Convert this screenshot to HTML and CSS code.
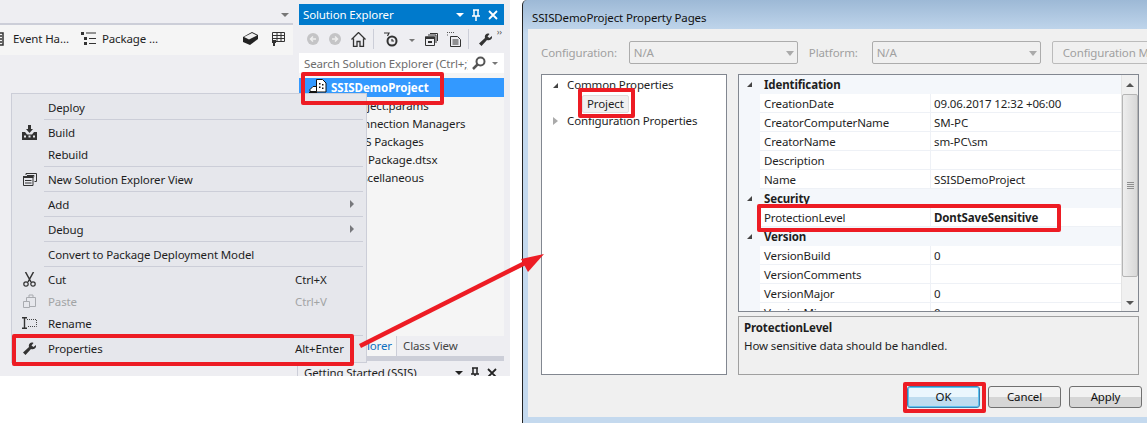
FILE: index.html
```html
<!DOCTYPE html>
<html lang="en">
<head>
  <meta charset="UTF-8">
  <title>SSISDemoProject Property Pages</title>
  <link rel="stylesheet" href="styles.css">
</head>
<body>
  <div class="canvas">
    <section class="vs">
      <div class="doc">
        <div class="doc-top"><span class="caret-down"></span></div>
        <div class="doc-tools">
          <svg class="ico ico-cut" width="8" height="14" viewBox="0 0 8 14"><path d="M0 1h6v12H0z M2 4h3M2 7h3M2 10h3" fill="none" stroke="#333" stroke-width="1.5"/></svg>
          <span class="tool-label event">Event Ha…</span>
          <svg class="ico" width="15" height="15" viewBox="0 0 15 15"><path d="M0 1h3v3H0zM3 11h3v3H3zM3 6h3v3H3z" fill="#333"/><path d="M5 2h10M8 7.500h7M8 12.500h7" stroke="#333"/></svg>
          <span class="tool-label">Package …</span>
          <span class="spacer"></span>
          <svg class="ico ico-cube" width="15" height="13" viewBox="0 0 15 13"><path d="M0 5l9-5 6 3v4l-8 6-7-3z" fill="#222"/><path d="M1 5l8-4 5 2.500-8 4z" fill="#eee"/></svg>
          <svg class="ico" width="14" height="15" viewBox="0 0 14 15"><path d="M1.500 1.500h12v9h-12zM1.500 4.500h12M1.500 7.500h12M6 1.500v9M10 1.500v9" fill="none" stroke="#333"/><path d="M1 9h4v3H4v3H2v-3H1z" fill="#333"/></svg>
        </div>
      </div>

      <aside class="explorer">
        <header class="pane-title">
          <span>Solution Explorer</span>
          <span class="grip"></span>
          <span class="pane-caret"></span>
          <svg width="10" height="12" viewBox="0 0 10 12"><path d="M2 1h6M3 1v6h4V1M1 7h8M5 7v5" fill="none" stroke="#fff" stroke-width="1.500"/></svg>
          <svg width="10" height="10" viewBox="0 0 10 10"><path d="M1 1l8 8M9 1l-8 8" stroke="#fff" stroke-width="1.800"/></svg>
        </header>
        <div class="pane-tools">
          <svg width="12" height="12" viewBox="0 0 12 12"><circle cx="6" cy="6" r="6" fill="#c4c4c6"/><path d="M9 6H3.500M6 3.500L3.500 6 6 8.500" fill="none" stroke="#eee" stroke-width="1.500"/></svg>
          <svg width="12" height="12" viewBox="0 0 12 12"><circle cx="6" cy="6" r="6" fill="#c4c4c6"/><path d="M3 6h5.500M6 3.500L8.500 6 6 8.500" fill="none" stroke="#eee" stroke-width="1.500"/></svg>
          <svg width="15" height="15" viewBox="0 0 15 15"><path d="M.5 7.500l7-7 7 7M2.500 6.500v8h3.500v-5h3v5h3.500v-8" fill="none" stroke="#333" stroke-width="1.300"/></svg>
          <span class="tool-sep"></span>
          <svg class="tool-clock" width="14" height="15" viewBox="0 0 14 15"><circle cx="8" cy="9" r="4.500" fill="none" stroke="#333" stroke-width="2"/><path d="M8 7v2h2M0 1h5L3.500 4" fill="none" stroke="#333" stroke-width="1.200"/></svg>
          <span class="mini-caret"></span>
          <svg class="tool-copy" width="13" height="13" viewBox="0 0 13 13"><path d="M.5 4h9v8.500h-9zM3 2h8v8M5 .5h7.500V8" fill="none" stroke="#333"/><path d="M0 3.500h10V6H0zM3 8h4v2H3z" fill="#333"/></svg>
          <svg class="tool-doc" width="14" height="15" viewBox="0 0 14 15"><path d="M3.500 4.500h7l3 3v7h-10zM5.500 8h6M5.500 10h6M5.500 12h6" fill="none" stroke="#333"/><path d="M0 .5h7M0 3h2" stroke="#555" stroke-dasharray="1 1"/></svg>
          <span class="tool-sep"></span>
          <svg width="13" height="13" viewBox="0 0 13 13"><path d="M13 3L10.500 5 8.500 3.500 10.500 1C8 -.5 5 2 6 5L0 10.500 2.500 13 8 7C11 8 13.500 6 13 3z" fill="#333"/></svg>
          <span class="more">&rsaquo;&rsaquo;</span>
        </div>
        <div class="pane-search">
          <span class="search-text">Search Solution Explorer (Ctrl+;)</span>
          <svg width="14" height="14" viewBox="0 0 14 14"><circle cx="8.500" cy="5.500" r="4" fill="none" stroke="#555" stroke-width="2"/><path d="M5.500 8.500L1 13" stroke="#555" stroke-width="2.500"/></svg>
          <span class="mini-caret"></span>
        </div>
        <ul class="tree">
          <li class="tree-selected">
            <svg width="18" height="17" viewBox="0 0 18 17"><path d="M7.500 .5h6l3.500 3.500v9H7.500z" fill="#fff" stroke="#111"/><path d="M10 4h1.500v1.500H10zM13 5h1.500v1.500H13zM10 7.500h1.500V9H10zM13 8.500h1.500V10H13z" fill="#111"/><path d="M1 10.500l3-3h3.500v5H1z" fill="#fff" stroke="#111"/><path d="M0 13h8v4H0z" fill="#111"/></svg>
            <span>SSISDemoProject</span>
          </li>
          <li class="tree-row">Project.params</li>
          <li class="tree-row">Connection Managers</li>
          <li class="tree-row">SSIS Packages</li>
          <li class="tree-row tree-file">Package.dtsx</li>
          <li class="tree-row">Miscellaneous</li>
        </ul>
        <div class="pane-tabs">
          <span class="tab-active">Solution Explorer</span>
          <span class="tab">Class View</span>
        </div>
        <div class="tabs-rule"></div>
        <div class="next-pane">
          <span>Getting Started (SSIS)</span>
          <span class="grip dark"></span>
          <span class="pane-caret dark"></span>
          <svg width="10" height="12" viewBox="0 0 10 12"><path d="M2 1h6M3 1v6h4V1M1 7h8M5 7v5" fill="none" stroke="#222" stroke-width="1.500"/></svg>
          <svg width="10" height="10" viewBox="0 0 10 10"><path d="M1 1l8 8M9 1l-8 8" stroke="#222" stroke-width="1.800"/></svg>
        </div>
      </aside>
    </section>

    <nav class="menu">
      <div class="menu-item"><span class="m-icon"></span><span class="m-label">Deploy</span></div>
      <div class="menu-sep"></div>
      <div class="menu-item">
        <span class="m-icon"><svg width="15" height="15" viewBox="0 0 15 15"><path d="M6 0h3v4h2L7.500 8 4 4h2z" fill="#333"/><path d="M0 7h3l2 2.500h5L12 7h3v8H0z" fill="#333"/><path d="M2 11.500h2M6.500 11.500h2M11 11.500h2" stroke="#e6e7ec" stroke-width="2"/></svg></span>
        <span class="m-label">Build</span>
      </div>
      <div class="menu-item"><span class="m-icon"></span><span class="m-label">Rebuild</span></div>
      <div class="menu-sep"></div>
      <div class="menu-item">
        <span class="m-icon"><svg width="14" height="13" viewBox="0 0 14 13"><path d="M.5 3.500h9.500v9H.5z" fill="none" stroke="#333"/><path d="M0 3h10.500v2H0zM2 7h6.500v1H2zM2 9.500h6.500v1H2z" fill="#333"/><path d="M3 2V.5h10.500v8H11.500M4 2.500h7v1" fill="none" stroke="#333"/></svg></span>
        <span class="m-label">New Solution Explorer View</span>
      </div>
      <div class="menu-sep"></div>
      <div class="menu-item"><span class="m-icon"></span><span class="m-label">Add</span><span class="m-arrow"></span></div>
      <div class="menu-sep"></div>
      <div class="menu-item"><span class="m-icon"></span><span class="m-label">Debug</span><span class="m-arrow"></span></div>
      <div class="menu-sep"></div>
      <div class="menu-item"><span class="m-icon"></span><span class="m-label">Convert to Package Deployment Model</span></div>
      <div class="menu-sep"></div>
      <div class="menu-item">
        <span class="m-icon"><svg width="13" height="15" viewBox="0 0 13 15"><path d="M2.500 0l5.500 10M10.500 0L5 10" stroke="#333" stroke-width="1.500" fill="none"/><circle cx="3" cy="12" r="2.200" fill="none" stroke="#333" stroke-width="1.200"/><circle cx="10" cy="12" r="2.200" fill="none" stroke="#333" stroke-width="1.200"/></svg></span>
        <span class="m-label">Cut</span><span class="m-key">Ctrl+X</span>
      </div>
      <div class="menu-item off">
        <span class="m-icon"><svg width="14" height="14" viewBox="0 0 14 14"><path d="M.5 7.500h6v6h-6zM3.500 7V3.500h9v9h-6M6 3.500V1h4v2.500" fill="none" stroke="#a9abb0"/></svg></span>
        <span class="m-label">Paste</span><span class="m-key">Ctrl+V</span>
      </div>
      <div class="menu-item">
        <span class="m-icon"><svg width="15" height="12" viewBox="0 0 15 12"><path d="M0 .7h5M0 11.300h5M2.500 .5v11" stroke="#333" stroke-width="1.400" fill="none"/><path d="M5 2.500h9.500v7H5" fill="none" stroke="#444" stroke-dasharray="1 1"/></svg></span>
        <span class="m-label">Rename</span>
      </div>
      <div class="menu-sep"></div>
      <div class="menu-item">
        <span class="m-icon"><svg width="13" height="13" viewBox="0 0 13 13"><path d="M13 3L10.500 5 8.500 3.500 10.500 1C8 -.5 5 2 6 5L0 10.500 2.500 13 8 7C11 8 13.500 6 13 3z" fill="#333"/></svg></span>
        <span class="m-label">Properties</span><span class="m-key">Alt+Enter</span>
      </div>
    </nav>

    <section class="dialog">
      <header class="dialog-title">SSISDemoProject Property Pages</header>
      <div class="dialog-body">
        <div class="config-row">
          <label>Configuration:</label>
          <span class="select select-config">N/A<i></i></span>
          <label>Platform:</label>
          <span class="select select-platform">N/A<i></i></span>
          <span class="config-btn">Configuration Manager...</span>
        </div>
        <div class="panes">
          <div class="nav-tree">
            <div class="nav-row"><span class="tri-open"></span>Common Properties</div>
            <div class="nav-child"><span>Project</span></div>
            <div class="nav-row"><span class="tri-closed"></span>Configuration Properties</div>
          </div>
          <div class="props">
            <div class="grid-wrap">
              <div class="grid">
                <div class="cat"><span class="tri-open"></span>Identification</div>
                <div class="prop"><span>CreationDate</span><span>09.06.2017 12:32 +06:00</span></div>
                <div class="prop"><span>CreatorComputerName</span><span>SM-PC</span></div>
                <div class="prop"><span>CreatorName</span><span>sm-PC\sm</span></div>
                <div class="prop"><span>Description</span><span></span></div>
                <div class="prop"><span>Name</span><span>SSISDemoProject</span></div>
                <div class="cat"><span class="tri-open"></span>Security</div>
                <div class="prop"><span>ProtectionLevel</span><span class="strong">DontSaveSensitive</span></div>
                <div class="cat"><span class="tri-open"></span>Version</div>
                <div class="prop"><span>VersionBuild</span><span>0</span></div>
                <div class="prop"><span>VersionComments</span><span></span></div>
                <div class="prop"><span>VersionMajor</span><span>0</span></div>
                <div class="prop"><span>VersionMinor</span><span>0</span></div>
              </div>
              <div class="scroll">
                <span class="scroll-up"></span>
                <span class="scroll-thumb"></span>
                <span class="scroll-down"></span>
              </div>
            </div>
            <div class="help">
              <strong>ProtectionLevel</strong>
              <p>How sensitive data should be handled.</p>
            </div>
          </div>
        </div>
        <div class="actions">
          <span class="btn btn-default">OK</span>
          <span class="btn">Cancel</span>
          <span class="btn">Apply</span>
        </div>
      </div>
    </section>

    <span class="mark mark-project"></span>
    <span class="mark mark-props"></span>
    <span class="mark mark-node"></span>
    <span class="mark mark-level"></span>
    <span class="mark mark-ok"></span>
    <svg class="arrow" width="190" height="100" viewBox="0 0 190 100">
      <path d="M1 94L170 9" stroke="#ed1c24" stroke-width="4.500"/>
      <path d="M185 2L162 7 169 20z" fill="#ed1c24"/>
    </svg>
  </div>
</body>
</html>
```

FILE: styles.css
```css
* {
  margin: 0;
  padding: 0;
  box-sizing: border-box;
}
body {
  background-color: #fff;
  font-family: "Noto Sans", "Open Sans", sans-serif;
  font-size: 11.5px;
  letter-spacing: -0.13px;
  color: #1e1e1e;
}
.canvas {
  position: relative;
  width: 1147px;
  height: 423px;
  overflow: hidden;
}

/* left window */
.vs {
  position: absolute;
  left: 0;
  top: 0;
  width: 510px;
  height: 376px;
  background-color: #eeeef2;
  display: flex;
  overflow: hidden;
}
.doc {
  width: 293px;
  margin-right: 6px;
}
.doc-top {
  height: 23px;
  display: flex;
  justify-content: flex-end;
  align-items: center;
  padding: 6px 4px 0 0;
}
.caret-down {
  border: 4px solid transparent;
  border-top: 4px solid #777;
  border-bottom: 0;
}
.doc-tools {
  height: 32px;
  background-color: #f5f5f5;
  border-top: 2px solid #ccced8;
  display: flex;
  align-items: center;
  padding: 0 8px 3px 0;
}
.doc-tools .ico {
  flex: none;
}
.ico-cut {
  margin-left: -3px;
}
.ico-cube {
  margin-right: 13px;
}
.tool-label {
  margin: 0 0 0 6px;
  white-space: nowrap;
  color: #1e1e1e;
}
.tool-label.event {
  margin: 0 12px 0 8px;
}
.spacer {
  flex: 1;
}
.explorer {
  width: 205px;
  margin-top: 4px;
  display: flex;
  flex-direction: column;
}
.explorer > * {
  flex: none;
}
.pane-title {
  height: 21px;
  background-color: #007acc;
  color: #fff;
  display: flex;
  align-items: center;
  gap: 7px;
  padding: 0 6px 0 4px;
  white-space: nowrap;
}
.grip {
  flex: 1;
  height: 5px;
  margin-left: 1px;
  background-image: radial-gradient(#59a8dd 0.6px, transparent 0.7px);
  background-size: 3px 2px;
}
.grip.dark {
  background-image: radial-gradient(#999 0.6px, transparent 0.7px);
}
.pane-caret {
  border: 4px solid transparent;
  border-top: 4px solid #fff;
  border-bottom: 0;
}
.pane-caret.dark {
  border-top-color: #222;
}
.pane-tools {
  height: 28px;
  display: flex;
  align-items: center;
  gap: 10px;
  padding: 0 0 0 8px;
  position: relative;
}
.tool-sep {
  width: 1px;
  height: 20px;
  margin: 0 0 0 -3px;
  background-color: #ccced8;
}
.tool-clock {
  margin-right: 1px;
}
.tool-copy {
  margin-left: 2px;
}
.tool-doc {
  margin-left: -1px;
}
.mini-caret {
  border: 3px solid transparent;
  border-top: 3px solid #777;
  border-bottom: 0;
  margin-top: 2px;
  margin-right: -2px;
}
.more {
  position: absolute;
  right: 2px;
  top: 0;
  font-size: 9px;
  color: #555;
}
.pane-search {
  height: 20px;
  background-color: #fff;
  display: flex;
  align-items: center;
  gap: 4px;
  padding: 0 6px 0 5px;
}
.search-text {
  flex: 1;
  overflow: hidden;
  white-space: nowrap;
  color: #6d6d6d;
}
.pane-search .mini-caret {
  margin: 1px 0 0 2px;
}
.tree {
  list-style: none;
  height: 263px;
  background-color: #f5f5f5;
  padding-top: 5px;
}
.tree-selected {
  height: 19px;
  background-color: #3399ff;
  color: #fff;
  font-weight: bold;
  letter-spacing: 0;
  display: flex;
  align-items: center;
  gap: 4px;
  padding-left: 10px;
}
.tree-row {
  height: 18px;
  line-height: 18px;
  padding-left: 50px;
  white-space: nowrap;
}
.tree-file {
  padding-left: 69px;
}
.pane-tabs {
  height: 20px;
  display: flex;
  background-color: #f5f5f5;
}
.tab-active {
  width: 98px;
  padding-right: 4px;
  text-align: right;
  color: #0e70c0;
  line-height: 20px;
  white-space: nowrap;
  overflow: hidden;
  border-right: 1px solid #ccced8;
}
.tab {
  padding-left: 6px;
  line-height: 20px;
  background-color: #eeeef2;
  flex: 1;
  color: #444;
}
.tabs-rule {
  height: 5px;
  background-color: #ccced8;
}
.next-pane {
  margin-top: 1px;
  height: 21px;
  margin-left: -2px;
  padding: 0 7px 0 6px;
  border-left: 1px solid #ccced8;
  display: flex;
  align-items: center;
  gap: 7px;
  white-space: nowrap;
}

/* context menu */
.menu {
  position: absolute;
  left: 11px;
  top: 93px;
  width: 356px;
  height: 270px;
  background-color: #e6e7ec;
  border: 1px solid #ccced8;
  padding: 3px 3px 0 0;
}
.menu-item {
  height: 22px;
  padding-bottom: 2px;
  display: flex;
  align-items: center;
}
.m-icon {
  width: 33px;
  margin-right: 3px;
  display: flex;
  justify-content: center;
  padding-left: 2px;
}
.m-label {
  flex: 1;
  white-space: nowrap;
}
.m-key {
  width: 68px;
  white-space: nowrap;
}
.m-arrow {
  border: 4px solid transparent;
  border-left: 4px solid #77787c;
  border-right: 0;
  margin-right: 9px;
}
.menu-sep {
  height: 3px;
  margin-left: 32px;
  border-top: 1px solid #ccced8;
}
.off {
  color: #a2a4a5;
}

/* property pages dialog */
.dialog {
  position: absolute;
  left: 522px;
  top: 0;
  width: 640px;
  height: 423px;
  background: linear-gradient(#9db9d6, #c4d9ee 34px);
  border-left: 1px solid #222;
  border-top-left-radius: 5px;
  padding: 1px 0 6px 5px;
  display: flex;
  flex-direction: column;
}
.dialog-title {
  height: 28px;
  line-height: 34px;
  padding-left: 4px;
  color: #111;
  white-space: nowrap;
}
.dialog-body {
  flex: 1;
  background-color: #f0f0f0;
  padding: 12px 0 0 13px;
}
.config-row {
  display: flex;
  align-items: center;
  height: 23px;
  width: 620px;
  color: #a0a0a0;
  white-space: nowrap;
}
.config-row label {
  flex: none;
}
.select {
  position: relative;
  flex: none;
  width: 169px;
  height: 23px;
  line-height: 21px;
  border: 1px solid #acacac;
  border-radius: 2px;
  padding-left: 4px;
}
.select i {
  position: absolute;
  right: 3px;
  top: 9px;
  border: 4px solid transparent;
  border-top: 5px solid #aaa;
  border-bottom: 0;
}
.select-config {
  margin: 0 11px 0 12px;
}
.select-platform {
  margin: 0 11px 0 14px;
}
.config-btn {
  flex: none;
  height: 23px;
  line-height: 21px;
  border: 1px solid #bbb;
  border-radius: 2px;
  padding: 0 9px 0 10px;
}
.panes {
  display: flex;
  gap: 11px;
  margin-top: 10px;
  height: 301px;
}
.nav-tree {
  width: 186px;
  background-color: #fff;
  border: 1px solid #828790;
  padding-top: 1px;
}
.nav-row {
  height: 18px;
  line-height: 18px;
  display: flex;
  align-items: center;
  padding-left: 11px;
}
.nav-row span {
  margin-right: 9px;
}
.tri-open {
  width: 0;
  height: 0;
  border-left: 5px solid transparent;
  border-bottom: 5px solid #444;
  flex: none;
}
.tri-closed {
  width: 0;
  height: 0;
  border: 4px solid transparent;
  border-left: 5px solid #aaa;
  border-right: 0;
  flex: none;
}
.nav-child {
  height: 18px;
  padding: 1px 0 0 40px;
  display: flex;
  align-items: center;
}
.nav-child span {
  background-color: #f0f0f0;
  border: 1px solid #ddd;
  border-radius: 2px;
  padding: 0 4px;
  height: 18px;
  line-height: 16px;
}
.props {
  width: 401px;
  display: flex;
  flex-direction: column;
  gap: 4px;
}
.grid-wrap {
  height: 238px;
  display: flex;
  border: 1px solid #828790;
  background-color: #fff;
  overflow: hidden;
}
.grid {
  flex: 1;
}
.cat {
  height: 19px;
  background-color: #f4f7fb;
  font-weight: bold;
  display: flex;
  align-items: center;
  padding-left: 8px;
}
.cat span {
  margin-right: 12px;
}
.prop {
  height: 19px;
  display: flex;
  line-height: 20px;
  background-color: #f4f7fb;
  padding-left: 21px;
}
.prop span {
  background-color: #fff;
  border-bottom: 1px solid #eef1f6;
  padding-left: 4px;
}
.prop span:first-child {
  width: 171px;
  border-right: 1px solid #eef1f6;
}
.prop span:last-child {
  flex: 1;
  padding-left: 3px;
}
.prop .strong {
  font-weight: bold;
}
.scroll {
  width: 17px;
  background-color: #f0f0f0;
  position: relative;
  border-left: 1px solid #e4e4e4;
}
.scroll-up, .scroll-down {
  position: absolute;
  left: 4px;
  border: 4px solid transparent;
}
.scroll-up {
  top: 8px;
  border-bottom: 4px solid #555;
  border-top: 0;
}
.scroll-down {
  bottom: 6px;
  border-top: 4px solid #555;
  border-bottom: 0;
}
.scroll-thumb {
  position: absolute;
  left: 0;
  right: 0;
  top: 19px;
  height: 183px;
  background: repeating-linear-gradient(#8f8f8f 0 1px, transparent 1px 2px) center / 7px 7px no-repeat, linear-gradient(90deg, #eee, #d8d8d8);
  border: 1px solid #b5b5b5;
  border-radius: 2px;
}
.help {
  height: 59px;
  background-color: #f0f0f0;
  border: 1px solid #a0a0a0;
  padding: 2px 5px;
  line-height: 18px;
}
.actions {
  display: flex;
  justify-content: flex-end;
  gap: 8px;
  padding: 11px 12px 0 0;
  width: 613px;
}
.btn {
  width: 73px;
  height: 22px;
  line-height: 20px;
  text-align: center;
  border: 1px solid #707070;
  border-radius: 3px;
  background: linear-gradient(#f2f2f2 50%, #d6d6d6 50%);
  color: #111;
}
.btn-default {
  border-color: #3c7fb1;
  background: linear-gradient(#eaf6fd 50%, #bedcef 50%);
  box-shadow: inset 0 0 0 1px #5dc4f0;
}

/* red annotations drawn over the screenshots */
.mark {
  position: absolute;
  border: 4px solid #ed1c24;
  border-radius: 2px;
}
.mark-project {
  left: 301px;
  top: 72px;
  width: 143px;
  height: 33px;
}
.mark-props {
  left: 12px;
  top: 334px;
  width: 342px;
  height: 32px;
}
.mark-node {
  left: 578px;
  top: 88px;
  width: 57px;
  height: 30px;
}
.mark-level {
  left: 757px;
  top: 204px;
  width: 304px;
  height: 28px;
}
.mark-ok {
  left: 903px;
  top: 382px;
  width: 83px;
  height: 31px;
}
.arrow {
  position: absolute;
  left: 359px;
  top: 252px;
}
```
